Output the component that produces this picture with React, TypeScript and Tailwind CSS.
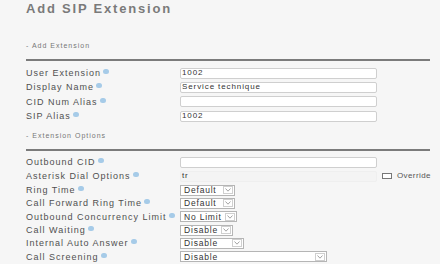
// Add SIP Extension form: two sections of labelled inputs / selects.
import React from 'react';

function Help() {
  return <span className="ml-[2px] mb-[3px] inline-block w-[6px] h-[5px] rounded-full bg-[#a6cbe8]" />;
}

function Row({ label, h, children }: { label: string; h: string; children: React.ReactNode }) {
  return (
    <div className={`flex items-center ${h}`}>
      <div className="w-[154px] flex items-center whitespace-nowrap text-[9px] leading-[12px] tracking-[1px] text-[#505050]">
        {label}
        <Help />
      </div>
      {children}
    </div>
  );
}

function TextBox({ value }: { value: string }) {
  return (
    <div className="w-[197px] h-[11px] border border-[#cfcfcf] rounded-[2px] bg-white flex items-center pl-[1px] text-[8px] tracking-[0.9px] text-[#333]">
      {value}
    </div>
  );
}

function Select({ value, w }: { value: string; w: string }) {
  return (
    <div className={`${w} h-[11px] border border-[#b5b5b5] bg-white flex items-center justify-between pl-[3px] pr-[1px] whitespace-nowrap text-[8.5px] leading-[10px] tracking-[0.8px] text-[#333]`}>
      <span>{value}</span>
      <span className="shrink-0 w-[10px] h-[8px] border border-[#cfcfcf] flex items-center justify-center">
        <svg width="6" height="4" viewBox="0 0 6 4">
          <path d="M0.5 0.5 L3 3.2 L5.5 0.5" fill="none" stroke="#999" strokeWidth="0.9" />
        </svg>
      </span>
    </div>
  );
}

function Section({ title, mt }: { title: string; mt: string }) {
  return (
    <>
      <div className={`${mt} h-[10px] leading-[10px] text-[7px] tracking-[1px] text-[#777]`}>{title}</div>
      <div className="mt-[8px] h-[2px] w-[404px] bg-[#7b7b7b]" />
    </>
  );
}

export default function App() {
  return (
    <div className="w-[440px] h-[264px] overflow-hidden bg-[#f6f6f6] pl-[26px] font-['Liberation_Sans',Arial,sans-serif]">
      <h1 className="mt-[1px] h-[16px] text-[13px] leading-[16px] font-bold tracking-[1.8px] text-[#7a7a7a]">
        Add SIP Extension
      </h1>

      <Section title="- Add Extension" mt="mt-[24px]" />
      <div className="mt-[5px]">
        <Row label="User Extension" h="h-[14.33px]"><TextBox value="1002" /></Row>
        <Row label="Display Name" h="h-[14.33px]"><TextBox value="Service technique" /></Row>
        <Row label="CID Num Alias" h="h-[14.33px]"><TextBox value="" /></Row>
        <Row label="SIP Alias" h="h-[14.33px]"><TextBox value="1002" /></Row>
      </div>

      <Section title="- Extension Options" mt="mt-[7.67px]" />
      <div className="mt-[4.5px]">
        <Row label="Outbound CID" h="h-[14px]"><TextBox value="" /></Row>
        <Row label="Asterisk Dial Options" h="h-[14px]">
          <div className="w-[197px] h-[11px] border border-[#efefef] rounded-[2px] bg-[#f4f4f4] flex items-center pl-[1px] text-[8px] tracking-[0.9px] text-[#333]">
            tr
          </div>
          <span className="ml-[5px] w-[10px] h-[6px] border border-[#777] bg-white" />
          <span className="ml-[5px] text-[8px] tracking-[0.4px] text-[#555]">Override</span>
        </Row>
        <Row label="Ring Time" h="h-[13.3px]"><Select value="Default" w="w-[55px]" /></Row>
        <Row label="Call Forward Ring Time" h="h-[13.3px]"><Select value="Default" w="w-[55px]" /></Row>
        <Row label="Outbound Concurrency Limit" h="h-[13.3px]"><Select value="No Limit" w="w-[57px]" /></Row>
        <Row label="Call Waiting" h="h-[13.3px]"><Select value="Disable" w="w-[53px]" /></Row>
        <Row label="Internal Auto Answer" h="h-[13.3px]"><Select value="Disable" w="w-[64px]" /></Row>
        <Row label="Call Screening" h="h-[13.3px]"><Select value="Disable" w="w-[147px]" /></Row>
      </div>
    </div>
  );
}
